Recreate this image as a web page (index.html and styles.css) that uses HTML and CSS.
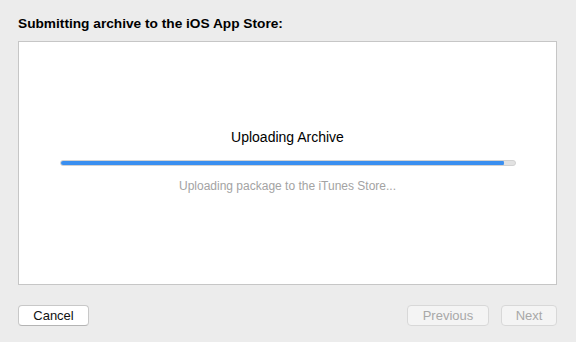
FILE: index.html
```html
<!DOCTYPE html>
<html>
<head>
    <title>Submit Archive</title>
    <link rel="stylesheet" href="styles.css">
</head>
<body>
    <h1 class="sheet-title">Submitting archive to the iOS App Store:</h1>

    <div class="panel">
        <div class="status-title">Uploading Archive</div>
        <div class="progress">
            <div class="progress-fill" style="width: 98%"></div>
        </div>
        <div class="status-detail">Uploading package to the iTunes Store...</div>
    </div>

    <div class="actions">
        <button class="btn">Cancel</button>
        <div class="actions-right">
            <button class="btn btn-prev" disabled>Previous</button>
            <button class="btn btn-next" disabled>Next</button>
        </div>
    </div>
</body>
</html>
```

FILE: styles.css
```css
body {
    font-family: "Liberation Sans", Arial, sans-serif;
    background: #ececec;
    margin: 0;
    padding: 16px 19px 0 18px;
    color: #000;
}
.sheet-title {
    font-size: 13.7px;
    font-weight: bold;
    line-height: 16px;
    margin: 0 0 9px 0;
}
.panel {
    background: #fff;
    border: 1px solid #c6c6c6;
    display: flex;
    flex-direction: column;
    align-items: center;
    padding-top: 87px;
    box-sizing: border-box;
    height: 244px;
}
.status-title {
    font-size: 14px;
    line-height: 17px;
}
.progress {
    margin-top: 14px;
    width: 456px;
    height: 6px;
    background: #e2e2e2;
    border: 1px solid #d2d2d2;
    box-sizing: border-box;
    border-radius: 3px;
    overflow: hidden;
}
.progress-fill {
    background: #3a8ff0;
    border-radius: 3px;
    margin: -1px;
    height: 6px;
}
.status-detail {
    margin-top: 13px;
    font-size: 12px;
    line-height: 15px;
    color: #a3a3a3;
}
.actions {
    display: flex;
    justify-content: space-between;
    margin-top: 20px;
}
.actions-right {
    display: flex;
    gap: 12px;
}
.btn {
    font-family: "Liberation Sans", Arial, sans-serif;
    font-size: 13px;
    height: 21px;
    padding: 0;
    background: #fff;
    border: 1px solid #c8c8c8;
    border-bottom-color: #b4b4b4;
    border-radius: 4px;
    color: #111;
    width: 71px;
}
.btn:disabled {
    background: #f4f4f4;
    border-color: #d8d8d8;
    color: #a8a8a8;
}
.btn-prev {
    width: 82px;
}
.btn-next {
    width: 56px;
}
```
